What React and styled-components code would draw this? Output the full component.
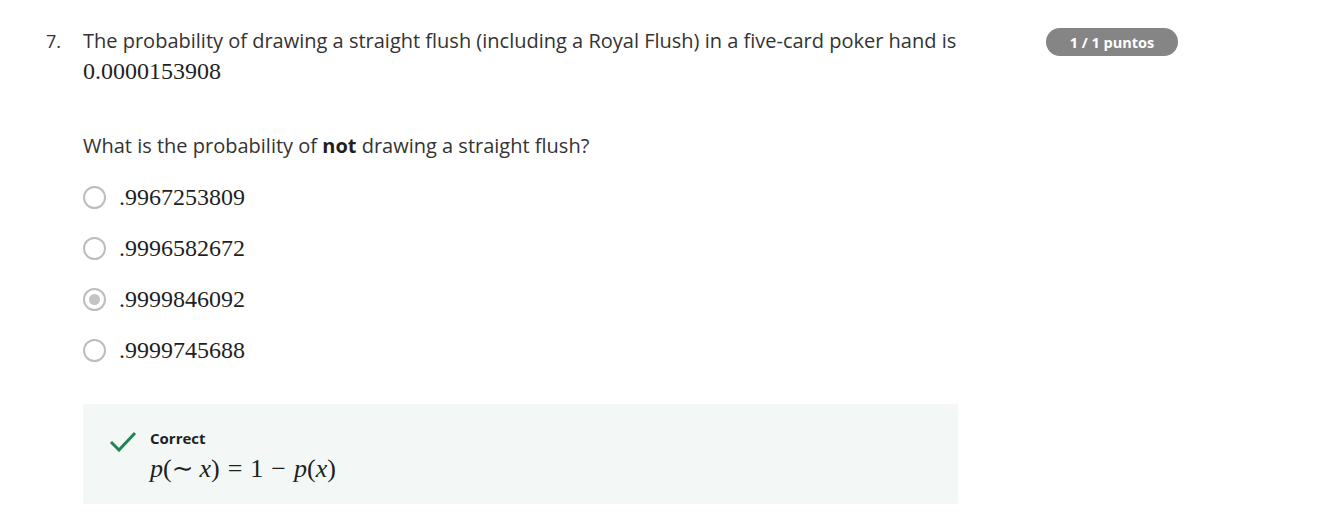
import styled, { createGlobalStyle } from "styled-components";

const GlobalStyle = createGlobalStyle`
  body {
    margin: 0;
    background: #fff;
    font-family: "Open Sans", sans-serif;
    color: #1f1f1f;
  }
`;

const Page = styled.div`
  display: flex;
  padding: 28px 0 0 46px;
`;

const Question = styled.div`
  display: flex;
  width: 912px;
`;

const Number = styled.div`
  width: 37px;
  font-size: 18px;
  line-height: 26px;
  color: #333;
`;

const Body = styled.div`
  flex: 1;
`;

const Prompt = styled.div`
  font-size: 20px;
  line-height: 26px;
  color: #333;
`;

const Math = styled.span`
  font-family: "Liberation Serif", "DejaVu Serif", serif;
  font-size: ${(p) => p.size || 24}px;
  color: #1f1f1f;
`;

const Op = styled.span`
  padding: 0 ${(p) => p.pad || 8}px;
`;

const MathLine = styled.div`
  line-height: 26px;
  margin-top: 4px;
`;

const SubPrompt = styled.div`
  margin-top: 47px;
  font-size: 20px;
  line-height: 26px;
  color: #333;
  b {
    font-weight: 700;
    color: #1f1f1f;
  }
`;

const Options = styled.div`
  display: flex;
  flex-direction: column;
  gap: 25px;
  margin-top: 25px;
`;

const Option = styled.label`
  display: flex;
  align-items: center;
  gap: 13px;
  height: 26px;
`;

const Radio = styled.span`
  box-sizing: border-box;
  width: 23px;
  height: 23px;
  border-radius: 50%;
  border: 2px solid #bdbdbd;
  display: flex;
  align-items: center;
  justify-content: center;
  &::after {
    content: "";
    width: 11px;
    height: 11px;
    border-radius: 50%;
    background: ${(p) => (p.checked ? "#c4c4c4" : "transparent")};
  }
`;

const Feedback = styled.div`
  margin-top: 41px;
  background: #f3f8f6;
  height: 100px;
  box-sizing: border-box;
  padding: 22px 0 0 26px;
  display: flex;
  gap: 13px;
`;

const FeedbackText = styled.div`
  display: flex;
  flex-direction: column;
  gap: 3px;
`;

const Label = styled.div`
  font-size: 15px;
  font-weight: 700;
  color: #1f1f1f;
  line-height: 24px;
`;

const Side = styled.div`
  margin-left: 88px;
`;

const Badge = styled.div`
  width: 132px;
  height: 28px;
  border-radius: 14px;
  background: #858585;
  color: #fff;
  font-size: 14.5px;
  font-weight: 700;
  display: flex;
  align-items: center;
  justify-content: center;
`;

const options = [
  { v: ".9967253809" },
  { v: ".9996582672" },
  { v: ".9999846092", checked: true },
  { v: ".9999745688" },
];

export default function App() {
  return (
    <>
      <GlobalStyle />
      <Page>
        <Question>
          <Number>7.</Number>
          <Body>
            <Prompt>
              The probability of drawing a straight flush (including a Royal
              Flush) in a five-card poker hand is
            </Prompt>
            <MathLine>
              <Math>0.0000153908</Math>
            </MathLine>
            <SubPrompt>
              What is the probability of <b>not</b> drawing a straight flush?
            </SubPrompt>
            <Options>
              {options.map((o) => (
                <Option key={o.v}>
                  <Radio checked={o.checked} />
                  <Math>{o.v}</Math>
                </Option>
              ))}
            </Options>
            <Feedback>
              <svg width="28" height="22" viewBox="0 0 28 22" style={{ marginTop: 4 }}>
                <path d="M2 12 L10 20 L26 3" fill="none" stroke="#1f8354" strokeWidth="3" />
              </svg>
              <FeedbackText>
                <Label>Correct</Label>
                <Math size={26}>
                  <i>p</i>(∼<Op pad={3} /><i>x</i>)<Op>=</Op>1<Op>−</Op><i>p</i>(<i>x</i>)
                </Math>
              </FeedbackText>
            </Feedback>
          </Body>
        </Question>
        <Side>
          <Badge>1 / 1 puntos</Badge>
        </Side>
      </Page>
    </>
  );
}
